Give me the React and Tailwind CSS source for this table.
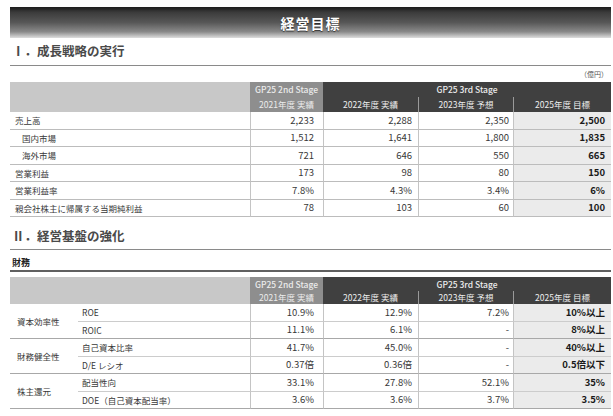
import React from "react";

const font = { fontFamily: '"Noto Sans CJK JP", "Noto Sans", sans-serif' };

const growth = [
  { label: "売上高", v: ["2,233", "2,288", "2,350", "2,500"] },
  { label: "国内市場", indent: true, v: ["1,512", "1,641", "1,800", "1,835"] },
  { label: "海外市場", indent: true, v: ["721", "646", "550", "665"] },
  { label: "営業利益", v: ["173", "98", "80", "150"] },
  { label: "営業利益率", v: ["7.8%", "4.3%", "3.4%", "6%"] },
  { label: "親会社株主に帰属する当期純利益", v: ["78", "103", "60", "100"] },
];

const finance = [
  {
    group: "資本効率性",
    rows: [
      { label: "ROE", v: ["10.9%", "12.9%", "7.2%", "10%以上"] },
      { label: "ROIC", v: ["11.1%", "6.1%", "-", "8%以上"] },
    ],
  },
  {
    group: "財務健全性",
    rows: [
      { label: "自己資本比率", v: ["41.7%", "45.0%", "-", "40%以上"] },
      { label: "D/E レシオ", v: ["0.37倍", "0.36倍", "-", "0.5倍以下"] },
    ],
  },
  {
    group: "株主還元",
    rows: [
      { label: "配当性向", v: ["33.1%", "27.8%", "52.1%", "35%"] },
      { label: "DOE（自己資本配当率）", v: ["3.6%", "3.6%", "3.7%", "3.5%"] },
    ],
  },
];

function TableHeader({ height }) {
  return (
    <div className={`flex ${height} text-[8.5px] leading-none`}>
      <div className="w-[240px] bg-[#c8c8c8]" />
      <div className="w-[73px] bg-[#8e8e8e] text-[#ececec] flex flex-col">
        <div className="flex-1 flex items-center justify-center font-medium">GP25 2nd Stage</div>
        <div className="flex-1 flex items-center justify-center">2021年度 実績</div>
      </div>
      <div className="flex-1 bg-[#404040] text-[#eeeeee] flex flex-col">
        <div className="flex-1 flex items-center justify-center font-medium">GP25 3rd Stage</div>
        <div className="flex-1 grid grid-cols-[95px_95px_98px]">
          <div className="flex items-center justify-center">2022年度 実績</div>
          <div className="flex items-center justify-center border-l border-[#9a9a9a]">2023年度 予想</div>
          <div className="flex items-center justify-center border-l border-[#9a9a9a]">2025年度 目標</div>
        </div>
      </div>
    </div>
  );
}

function Values({ v, line }) {
  return (
    <>
      <div className={`flex items-center justify-end pr-[9px] border-l border-[#c4c4c4] border-b ${line}`}>{v[0]}</div>
      <div className={`flex items-center justify-end pr-[6px] border-l border-[#c4c4c4] border-b ${line}`}>{v[1]}</div>
      <div className={`flex items-center justify-end pr-[4px] border-l border-[#c4c4c4] border-b ${line}`}>{v[2]}</div>
      <div className={`flex items-center justify-end pr-[6px] bg-[#ebebeb] font-bold text-[#1a1a1a] border-l border-[#c4c4c4] border-b ${line}`}>{v[3]}</div>
    </>
  );
}

function SectionHeading({ children, className }) {
  return (
    <div className={`flex items-center border-b border-[#8a8a8a] pl-[2px] text-[12.5px] font-semibold text-[#4a4a4a] leading-none ${className}`}>
      {children}
    </div>
  );
}

export default function App() {
  return (
    <div className="w-[613px] h-[416px] bg-white overflow-hidden text-[#383838]" style={font}>
      <div className="pl-[10px] pr-[2px] pt-[7px]">
        {/* Title bar */}
        <div className="h-[31px] flex items-center justify-center bg-[linear-gradient(to_bottom,#1c1c1c_0%,#3c3c3c_18%,#575757_50%,#8a8a8a_80%,#dedede_100%)]">
          <span className="text-[14px] font-bold text-white tracking-[1px] [text-shadow:0_1px_1px_rgba(0,0,0,0.6)] leading-none">経営目標</span>
        </div>

        <SectionHeading className="h-[28px]">Ⅰ．成長戦略の実行</SectionHeading>

        <div className="h-[16px] flex items-center justify-end pr-[3px] text-[7px] text-[#555] leading-none">（億円）</div>

        <TableHeader height="h-[30px]" />
        <div className="grid grid-cols-[240px_73px_95px_95px_98px] auto-rows-[17.5px] text-[9.5px] leading-none">
          {growth.map((r) => (
            <React.Fragment key={r.label}>
              <div className={`flex items-center border-b border-[#bcbcbc] text-[8.5px] ${r.indent ? "pl-[12px]" : "pl-[5px]"}`}>
                {r.label}
              </div>
              <Values v={r.v} line="border-b-[#bcbcbc]" />
            </React.Fragment>
          ))}
        </div>

        <SectionHeading className="h-[33px] pt-[7px]">Ⅱ．経営基盤の強化</SectionHeading>

        <div className="h-[22px] pt-[5px] flex items-center border-b-2 border-[#606060] pl-[2px] text-[9px] font-bold text-[#222] leading-none">
          財務
        </div>

        <div className="mt-[5px]">
          <TableHeader height="h-[27px]" />
          <div className="grid grid-cols-[68px_172px_73px_95px_95px_98px] auto-rows-[17.5px] text-[9.5px] leading-none">
            {finance.map((g) => (
              <React.Fragment key={g.group}>
                <div className="row-span-2 flex items-center pl-[7px] border-b border-[#a8a8a8] text-[8.5px]">{g.group}</div>
                {g.rows.map((r, i) => {
                  const line = i === 0 ? "border-b-[#cccccc]" : "border-b-[#a8a8a8]";
                  return (
                    <React.Fragment key={r.label}>
                      <div className={`flex items-center pl-[4px] border-b ${line} text-[8.5px]`}>{r.label}</div>
                      <Values v={r.v} line={line} />
                    </React.Fragment>
                  );
                })}
              </React.Fragment>
            ))}
          </div>
        </div>
      </div>
    </div>
  );
}
